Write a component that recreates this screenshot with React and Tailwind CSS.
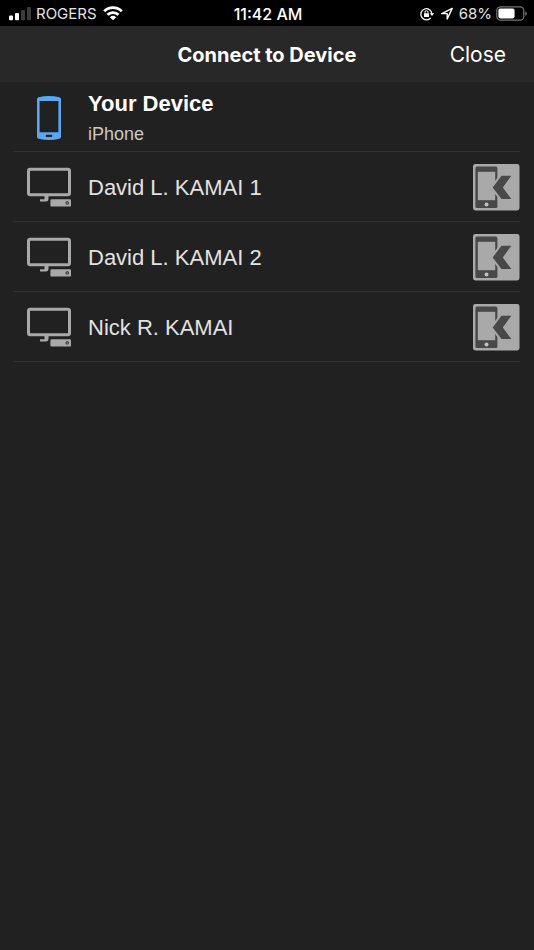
const devices = ["David L. KAMAI 1", "David L. KAMAI 2", "Nick R. KAMAI"];

function SignalIcon() {
  return (
    <svg className="h-4 w-6 shrink-0" viewBox="0 0 24 16" aria-hidden="true">
      <rect x="1" y="9.5" width="4" height="4.8" rx="1" fill="#fff" />
      <rect x="7" y="7" width="4" height="7.3" rx="1" fill="#fff" />
      <rect x="13" y="4" width="4" height="10.3" rx="1" fill="#3a3a3a" />
      <rect x="19" y="1" width="4" height="13.3" rx="1" fill="#3a3a3a" />
    </svg>
  );
}

function WifiIcon() {
  return (
    <svg className="h-4 w-5 shrink-0" viewBox="0 0 20 16" aria-hidden="true" fill="none" stroke="#fff" strokeWidth="2.8">
      <path d="M1.2 5.3a12.6 12.6 0 0 1 17.6 0" />
      <path d="M4.5 8.8a7.9 7.9 0 0 1 11 0" />
      <path d="M10 14.3L6.9 11.2a4.5 4.5 0 0 1 6.2 0Z" fill="#fff" stroke="none" />
    </svg>
  );
}

function RotationLockIcon() {
  return (
    <svg className="h-4 w-4 shrink-0" viewBox="0 0 16 16" aria-hidden="true" fill="none" stroke="#fff">
      <path d="M11.7 11.9A5.6 5.6 0 1 1 13 8" strokeWidth="1.3" />
      <path d="M10.8 7.2h4.4L13 10Z" fill="#fff" stroke="none" />
      <rect x="5" y="7.2" width="5" height="3.8" rx="0.5" fill="#fff" stroke="none" />
      <path d="M6 7.5V6.2a1.5 1.5 0 0 1 3 0v1.3" strokeWidth="1" />
    </svg>
  );
}

function LocationIcon() {
  return (
    <svg className="h-4 w-3 shrink-0" viewBox="0 0 12 16" aria-hidden="true" fill="none" stroke="#fff" strokeWidth="1.4" strokeLinejoin="round">
      <path d="M11.2 2.4L0.8 7.6H6.2V13Z" />
    </svg>
  );
}

function BatteryIcon() {
  return (
    <svg className="h-4 w-8 shrink-0" viewBox="0 0 32 16" aria-hidden="true">
      <rect x="0.8" y="0.8" width="27" height="13.4" rx="3.8" fill="none" stroke="#777" strokeWidth="1.2" />
      <rect x="2.4" y="2.6" width="16.2" height="9.8" rx="1.8" fill="#fff" />
      <path d="M29.3 5.2c2 .8 2 3.8 0 4.6Z" fill="#777" />
    </svg>
  );
}

function PhoneIcon() {
  return (
    <svg className="h-11 w-6 shrink-0" viewBox="0 0 24 44" aria-hidden="true">
      <path
        fill="#59a8f4"
        fillRule="evenodd"
        d="M0 3.2Q0 1.8 1.6 1.3Q12-1.2 22.4 1.3Q24 1.8 24 3.2V40.8Q24 42.2 22.4 42.7Q12 45.2 1.6 42.7Q0 42.2 0 40.8ZM2.6 5V36.2H21.4V5ZM9.6 38.7Q8.8 38.7 8.8 39.5V40.2Q8.8 41 9.6 41H14.4Q15.2 41 15.2 40.2V39.5Q15.2 38.7 14.4 38.7Z"
      />
    </svg>
  );
}

function DesktopIcon() {
  return (
    <svg className="h-10 w-11 shrink-0" viewBox="0 0 44 40" aria-hidden="true">
      <rect x="1.5" y="2.3" width="41" height="25.4" rx="1.8" fill="none" stroke="#a9a9a9" strokeWidth="3" />
      <path d="M17.5 28H21.5V31.8Q21.5 34.4 18.9 34.4H13V32.3H17.5Z" fill="#a9a9a9" />
      <path
        fill="#a9a9a9"
        fillRule="evenodd"
        d="M24.6 32.3H42.8Q44 32.3 44 33.5V38.4Q44 39.6 42.8 39.6H24.6Q23.4 39.6 23.4 38.4V33.5Q23.4 32.3 24.6 32.3ZM40.2 34.2a1.7 1.7 0 1 0 0 3.4a1.7 1.7 0 1 0 0-3.4Z"
      />
      <circle cx="40.2" cy="35.9" r="1" fill="#777" />
    </svg>
  );
}

function KamaiIcon() {
  return (
    <svg className="h-12 w-12" viewBox="0 0 48 48" aria-hidden="true">
      <rect x="1" y="1" width="46.5" height="46.5" rx="2.4" fill="#a9a9a9" />
      <rect x="3.4" y="3.4" width="22" height="41.6" rx="1.6" fill="#484848" />
      <rect x="5.8" y="8.8" width="17.4" height="28.4" fill="#a9a9a9" />
      <circle cx="14.5" cy="41.6" r="2" fill="#c0c0c0" />
      <path
        d="M29.5 12.7H39.3L30.8 24.4L39.3 36H29.5L20.7 24.4Z"
        fill="#484848"
        stroke="#a9a9a9"
        strokeWidth="4"
        paintOrder="stroke"
      />
    </svg>
  );
}

export default function App() {
  return (
    <div className="min-h-screen bg-[#212121] font-['Liberation_Sans',sans-serif] text-white">
      <div className="grid h-[26px] grid-cols-[1fr_auto_1fr] items-center bg-black pt-0.5 pl-2 pr-1.5 font-['Inter',sans-serif] text-[15px]">
        <div className="flex items-center">
          <SignalIcon />
          <span className="ml-1 mr-1.5 text-[#e4e4e4]">ROGERS</span>
          <WifiIcon />
        </div>
        <span className="text-[16px] font-medium">11:42 AM</span>
        <div className="flex items-center justify-end">
          <RotationLockIcon />
          <span className="ml-1.5 mr-1.5 flex"><LocationIcon /></span>
          <span className="mr-1 text-[#e4e4e4]">68%</span>
          <BatteryIcon />
        </div>
      </div>
      <header className="grid h-14 grid-cols-[1fr_auto_1fr] items-center bg-[#282828] px-7 pt-0.5 font-['Inter',sans-serif]">
        <h1 className="col-start-2 text-[20px] font-bold">Connect to Device</h1>
        <button type="button" className="justify-self-end text-[21px]">Close</button>
      </header>
      <ul className="pl-[13px] pr-3.5">
        <li className="h-[70px] border-b border-[#303030]">
          <button type="button" className="flex h-full w-full items-center pt-0.5 text-left">
            <span className="flex w-[75px] justify-center pr-1"><PhoneIcon /></span>
            <span className="flex flex-col">
              <span className="text-[22px] leading-8 font-bold">Your Device</span>
              <span className="text-[18px] leading-7 text-[#c8c8c8]">iPhone</span>
            </span>
          </button>
        </li>
        {devices.map((name) => (
          <li key={name} className="h-[70px] border-b border-[#303030]">
            <button type="button" className="flex h-full w-full items-center text-left">
              <span className="flex w-[75px] justify-center pr-1"><DesktopIcon /></span>
              <span className="grow pt-0.5 text-[22px] text-[#e2e2e2]">{name}</span>
              <KamaiIcon />
            </button>
          </li>
        ))}
      </ul>
    </div>
  );
}
